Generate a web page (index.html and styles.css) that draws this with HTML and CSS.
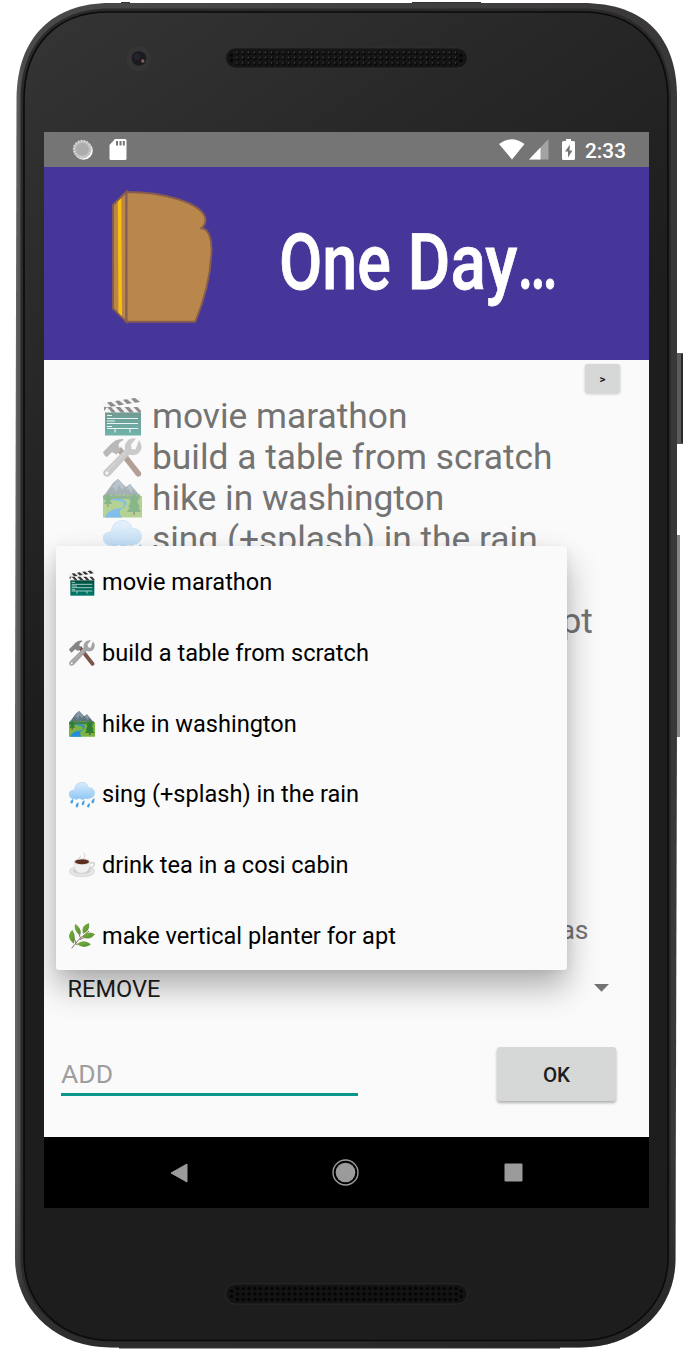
FILE: index.html
```html
<!DOCTYPE html>
<html lang="en">
<head>
<meta charset="utf-8">
<title>One Day…</title>
<link rel="stylesheet" href="styles.css">
</head>
<body>
<svg class="defs" width="0" height="0" aria-hidden="true">
  <defs>
    <linearGradient id="sky" x1="0" y1="0" x2="0" y2="1"><stop offset="0" stop-color="#d8ecfb"/><stop offset="1" stop-color="#8fc5f4"/></linearGradient>
    <linearGradient id="slate" x1="0" y1="0" x2="0" y2="1"><stop offset="0" stop-color="#004d40"/><stop offset="1" stop-color="#00796b"/></linearGradient>
    <linearGradient id="leaf" x1="0" y1="0" x2="1" y2="1"><stop offset="0" stop-color="#7cb342"/><stop offset="1" stop-color="#558b2f"/></linearGradient>
    <symbol id="movie" viewBox="0 0 39 39">
      <path d="M2 15h36v23.500H2z" fill="url(#slate)"/>
      <path d="M0 6 38 0v5L1 11z" fill="#eee"/>
      <path d="M4 5.400 8 4.700l5 4.200-5 .900zM12 4.100l4-.6 5 4.100-5 .8zM20 2.800l4-.6 5 4.100-5 .8zM28 1.500l4-.6 5 4-5 .9z" fill="#333"/>
      <path d="M1 10h37v5.500H1z" fill="#eee"/>
      <path d="M1 10h3l-3 4zM8 10l5 5.500H9L4 10zM17 10l5 5.500h-4.500L12.500 10zM26 10l5 5.500h-4.500L21.500 10zM34.500 10l3.500 4v1.500h-2.500l-5-5.500z" fill="#333"/>
      <path d="M4 18.500h5M4 21.500h31M4 24h8M4 26.500h31M4 29.500h5M4 31.500h31M12 32v3.500M27 32v3.500" stroke="#d9f3ee" stroke-width="1.100" fill="none"/>
    </symbol>
    <symbol id="tools" viewBox="0 0 39 39">
      <path d="m14 13 4-4 20 25.500q1 3-2 4-2 .500-3-1z" fill="#795548"/>
      <path d="M0 14 7 7Q13 0 20 1l.500 1q-5 2-5 6l2.500 4-4.500 4.500L9 14l-5 5q-3-1-4-5z" fill="#858585"/>
      <path d="M36 2q3 4 2.500 8-1.500 6-7 7-2.500.500-5-.500L7 37.500q-3 2.500-6 0-2-3 .500-5.500L22 11.500q-1-5 2-8 3-4 9-3l-5 6 .500 4.500 4 .500z" fill="#a4a4a4"/>
      <path d="M3 34.500 24 13" stroke="#b5b5b5" stroke-width="1.500"/>
      <circle cx="4" cy="35" r="1.500" fill="#fafafa"/>
    </symbol>
    <symbol id="park" viewBox="0 0 39 39">
      <path d="M0 18 10 4l5-4 8 8 4-3 12 14v6H0z" fill="#617581"/>
      <path d="m15 0-7 9 3-1 2 5 3-7 3 5 3-3zM27 5l-4 6 3-1 2 4 2-4 3 3z" fill="#8398a4"/>
      <path d="M0 17q20-3 39 0v21.500H0z" fill="#7cb342"/>
      <path d="m0 17 2-2 2 2 2-2 2 2 3-2 2 2 2-2 2 2 2-2 2 2 2-2 2 2 2-2 2 2 3-2 2 2 3-2v5H0z" fill="#3f8048"/>
      <path d="M5 21q15 0 16 4t-9 5q-9 3-10 8.500h17q-5-6 0-9 7-4 3-8-5-3-17-.500z" fill="#238ce0"/>
      <path d="m5 14-4 7h2l-2 4h8l-2-4h2zM31 14l-5 8h2l-3 6h2l-3 5h14l-3-5h2l-3-6h2z" fill="#2e7d32"/>
      <path d="M30 33h2v3h-2zM4 25h1.500v3H4z" fill="#6d4c41"/>
    </symbol>
    <symbol id="rain" viewBox="0 0 39 39">
      <path d="M7 25Q0 24 0 17.500 1 12 8 12 9 6 12 3 16 0 21 .500q6 .500 8 8 8-.500 9.500 7 0 8-7.500 9-3 2-6 0-5 4-9 0-5 3-9 .500z" fill="url(#sky)" stroke="#9bc9ee" stroke-width=".7"/>
      <path d="M6 25q-6 5-3 7 4 1 3-7zM23 27q-6 5-3 8 4 0 3-8zM38 24q-7 6-3 8 4 0 3-8zM14 30q-6 5-3 8 4 1 3-8zM31 31q-6 5-3 7 4 1 3-7z" fill="#429fe3"/>
    </symbol>
    <symbol id="cup" viewBox="0 0 39 39">
      <ellipse cx="19.500" cy="29" rx="19" ry="8.300" fill="#e5e5e5" stroke="#c5c5c5" stroke-width=".7"/>
      <ellipse cx="19.500" cy="28" rx="13" ry="5" fill="#cfcfcf"/>
      <path d="M31 17q8-3 7 2-1 4-10 7" fill="none" stroke="#cacaca" stroke-width="2"/>
      <path d="M7 14q0 14 7 17 6 2 12-1 6-4 6-16z" fill="#f0f0f0" stroke="#ccc" stroke-width=".5"/>
      <ellipse cx="19.500" cy="14.500" rx="12.500" ry="5" fill="#ddd"/>
      <ellipse cx="19.500" cy="14.500" rx="10.500" ry="3.700" fill="#5d2d20"/>
      <path d="M17 12q-4-3 1-6M21 11q5-5 1-10" fill="none" stroke="#d8cfcd" stroke-width="1.500"/>
    </symbol>
    <symbol id="herb" viewBox="0 0 39 39">
      <path d="M4 38Q13 24 30 12M10 31q0-6-4-10M17 22q-2-6-4-10M16 25q9-5 17-7M10 32q9-2 14 0" fill="none" stroke="#8d6e63" stroke-width="1.500"/>
      <g fill="url(#leaf)">
        <path d="M5 10q-9 8-2 17l4 4q4-12-2-21z"/><path d="M9 1q-3 11 8 17Q20 8 9 1z"/>
        <path d="M30 0Q17 4 21 16q11-4 9-16z"/><path d="M39 17q-10-7-19 4 11 6 19-4z"/>
        <path d="M12 32q9-9 21 0-10 8-21 0z"/>
      </g>
    </symbol>
  </defs>
</svg>

<main class="stage">
  <svg class="device" viewBox="0 0 690 1353" aria-hidden="true">
    <defs>
      <linearGradient id="rim" x1="0" y1="0" x2="1" y2="0"><stop offset="0" stop-color="#666"/><stop offset=".012" stop-color="#4a4a4a"/><stop offset=".5" stop-color="#424142"/><stop offset="1" stop-color="#3a3738"/></linearGradient>
      <linearGradient id="shade" x1="0" y1="0" x2="0" y2="1"><stop offset=".85" stop-color="#111" stop-opacity="0"/><stop offset="1" stop-color="#111" stop-opacity=".5"/></linearGradient>
      <linearGradient id="glass" gradientUnits="userSpaceOnUse" x1="60" y1="10" x2="380" y2="480"><stop offset="0" stop-color="#343435"/><stop offset=".45" stop-color="#292929"/><stop offset="1" stop-color="#1d1d1e"/></linearGradient>
      <pattern id="topdots" x="234.500" y="50.200" width="5.750" height="5.300" patternUnits="userSpaceOnUse"><circle cx="3" cy="3" r="1.700" fill="#050505"/><circle cx="2.400" cy="2.200" r=".8" fill="#4a4a4a"/></pattern>
      <pattern id="lowdots" x="234.500" y="1285.500" width="5.750" height="5.500" patternUnits="userSpaceOnUse"><circle cx="3" cy="3" r="1.600" fill="#020202"/></pattern>
    </defs>
    <path d="M121 3V2h9v1M412 3V2h69v1M119 1346h441v2.500H119z" fill="#333"/>
    <rect x="676" y="353" width="7" height="91" fill="#5b5b5b"/>
    <rect x="681" y="354" width="2" height="89" fill="#292929"/>
    <rect x="676" y="535" width="4" height="202" fill="#858585"/>
    <path d="M110 3H582C645 3 677 37 677 97V720L675.500 1260C675 1310 636 1347.500 580 1347.500H112C52 1347.500 15 1306 15 1258V720L16.500 98C17 37 53 3 110 3z" fill="url(#rim)"/>
    <path d="M110 3H582C645 3 677 37 677 97V720L675.500 1260C675 1310 636 1347.500 580 1347.500H112C52 1347.500 15 1306 15 1258V720L16.500 98C17 37 53 3 110 3z" fill="url(#shade)"/>
    <path d="M109 8.500H582C637 8.500 671 43 671 100V1258C671 1305 633 1342.500 580 1342.500H112C58 1342.500 20.500 1305 20.500 1258V100C20.500 43 55 8.500 109 8.500z" fill="#2a2a2a"/>
    <path d="M108 12H582C635 12 668 45 668 100V1257C668 1304 631 1340.500 580 1340.500H112C60 1340.500 24 1304 24 1257V100C24 45 57 12 108 12z" fill="url(#glass)" stroke="#0b0b0b" stroke-width="1.600"/>
    <circle cx="138.500" cy="58.500" r="12.500" fill="#353536"/>
    <circle cx="139" cy="58.500" r="7.300" fill="#1b1a21"/>
    <circle cx="137" cy="57" r="3" fill="#26242e"/>
    <circle cx="142.800" cy="61" r="1.700" fill="#8d5e5c"/>
    <rect x="225.500" y="48" width="242" height="20" rx="10" fill="#151515" stroke="#333" stroke-width=".7"/>
    <rect x="234.500" y="50.200" width="224.200" height="15.900" fill="url(#topdots)"/>
    <g fill="#050505"><circle cx="231.500" cy="55.500" r="1.700"/><circle cx="231.500" cy="60.500" r="1.700"/><circle cx="461" cy="55.500" r="1.700"/><circle cx="461" cy="60.500" r="1.700"/></g>
    <rect x="225.500" y="1284" width="242" height="20" rx="10" fill="#131313" stroke="#303030" stroke-width=".7"/>
    <rect x="234.500" y="1285.500" width="224.200" height="16.500" fill="url(#lowdots)"/>
    <g fill="#020202"><circle cx="231.500" cy="1291" r="1.600"/><circle cx="231.500" cy="1296.500" r="1.600"/><circle cx="461" cy="1291" r="1.600"/><circle cx="461" cy="1296.500" r="1.600"/></g>
  </svg>

  <section class="screen">
    <div class="status">
      <svg class="status-icon sync" width="22" height="22" viewBox="0 0 22 22"><circle cx="11.500" cy="11.500" r="9.300" fill="#fff"/><circle cx="10.300" cy="10.300" r="9.200" fill="#bdbdbd"/><circle cx="10.300" cy="10.300" r="8.200" fill="none" stroke="#d6d6d6" stroke-width="2.600" stroke-dasharray="1.100 1.750"/><circle cx="10.300" cy="10.300" r="6.500" fill="#adadad"/></svg>
      <svg class="status-icon" width="18" height="22" viewBox="0 0 18 22"><path d="M6 0h10q1.500 0 1.500 1.500v18q0 1.500-1.500 1.500H2Q.5 21 .5 19.500V6z" fill="#fff"/><path d="M7 2h2v4.500H7zM10.500 2h2v4.500h-2zM13.800 2h2v4.500h-2z" fill="#757575"/></svg>
      <span class="spacer"></span>
      <svg class="status-icon" width="26" height="21" viewBox="0 0 26 21"><path d="M0 5Q12.500-4.500 25.500 5L13 20.500z" fill="#fff"/></svg>
      <svg class="status-icon cell" width="20" height="21" viewBox="0 0 20 21"><path d="M19.500 0v20.500H0z" fill="#a3a3a3"/><path d="M11.500 8.500v12H0z" fill="#fff"/></svg>
      <svg class="status-icon battery" width="13" height="22" viewBox="0 0 13 22"><path d="M4 0h5v2h2.500Q13 2 13 3.500v16q0 1.500-1.500 1.500h-10Q0 21 0 19.500v-16Q0 2 1.500 2H4z" fill="#fff"/><path d="M8 5.500 3 12.500h3v6l4.500-7H7.500z" fill="#757575"/></svg>
      <span class="time">2:33</span>
    </div>

    <header class="banner">
      <svg width="605" height="192" viewBox="44 167 605 192">
        <g stroke="#865c4e" stroke-width="1.900" fill="#b9874b">
          <path d="M113 205 126.500 191.500V322L113 308.500z"/>
          <path d="M126.500 192C165 192 200 203 205 217Q207 223 201.500 228.300C209 228.500 212 240 211.500 252 210.500 277 204 301 195.300 321.800H126.500z"/>
        </g>
        <path d="m117.800 201.500 3.500-3.300.7 118-3.500-3.500z" fill="#fbc108"/>
        <text class="title" y="289"><tspan x="279" textLength="112" lengthAdjust="spacingAndGlyphs">One</tspan><tspan x="407.500" textLength="110" lengthAdjust="spacingAndGlyphs">Day</tspan><tspan x="517.500" textLength="40" lengthAdjust="spacingAndGlyphs">…</tspan></text>
      </svg>
    </header>

    <div class="content">
      <button class="btn next">&gt;</button>
      <ul class="list">
        <li><svg><use href="#movie"/></svg>movie marathon</li>
        <li><svg><use href="#tools"/></svg>build a table from scratch</li>
        <li><svg><use href="#park"/></svg>hike in washington</li>
        <li><svg><use href="#rain"/></svg>sing (+splash) in the rain</li>
        <li><svg><use href="#cup"/></svg>drink tea in a cosi cabin</li>
        <li><svg><use href="#herb"/></svg>make vertical planter for apt</li>
      </ul>
      <div class="note">as</div>
      <div class="spinner"><span>REMOVE</span><svg width="15" height="8" viewBox="0 0 15 8"><path d="M0 0h15L7.500 7.700z" fill="#737373"/></svg></div>
      <div class="entry"><div class="field">ADD</div><button class="btn ok">OK</button></div>
    </div>

    <nav class="nav">
      <svg width="18" height="20" viewBox="0 0 18 20"><path d="M1 10 17 1v18z" fill="#9b9b9b" stroke="#9b9b9b" stroke-linejoin="round"/></svg>
      <svg width="27" height="27" viewBox="0 0 27 27"><circle cx="13.500" cy="13.500" r="12.500" fill="none" stroke="#9b9b9b" stroke-width="1.400"/><circle cx="13.500" cy="13.500" r="9.800" fill="#9b9b9b"/></svg>
      <svg width="19" height="19" viewBox="0 0 19 19"><rect x=".5" y=".5" width="18" height="18" rx="1" fill="#9b9b9b"/></svg>
    </nav>

    <ul class="popup">
      <li><svg><use href="#movie"/></svg>movie marathon</li>
      <li><svg><use href="#tools"/></svg>build a table from scratch</li>
      <li><svg><use href="#park"/></svg>hike in washington</li>
      <li><svg><use href="#rain"/></svg>sing (+splash) in the rain</li>
      <li><svg><use href="#cup"/></svg>drink tea in a cosi cabin</li>
      <li><svg><use href="#herb"/></svg>make vertical planter for apt</li>
    </ul>
  </section>
</main>
</body>
</html>
```

FILE: styles.css
```css
* { box-sizing: border-box; }
body { margin: 0; background: #fff; font-family: Roboto, "Liberation Sans", sans-serif; }
ul { margin: 0; padding: 0; list-style: none; }
svg { display: block; flex: none; }
.defs { position: absolute; }
.stage { position: relative; width: 690px; height: 1353px; padding: 132px 41px 0 44px; overflow: hidden; }
.device { position: absolute; inset: 0; width: 690px; height: 1353px; }
.screen { position: relative; display: flex; flex-direction: column; height: 1076px; overflow: hidden; background: #fafafa; }

.status { display: flex; height: 35px; padding: 7px 23px 0 27.500px; background: #757575; color: #fff; }
.sync { margin-right: 15px; }
.spacer { flex: 1; }
.cell { margin: 0 13px 0 4px; }
.battery { margin-right: 10.500px; }
.time { font-size: 20.800px; font-weight: 500; line-height: 24px; }

.banner { height: 192.500px; background: #463699; }
.title { font-size: 78px; font-weight: 500; fill: #fff; stroke: #fff; stroke-width: .8px; }

.content { display: flex; flex-direction: column; height: 777.500px; padding: 4.500px 33px 0 17px; }
.btn { border: 0; padding: 0; border-radius: 3px; background: #d6d8d7; color: #1d1d1d; font-family: inherit; box-shadow: 0 2px 3px rgba(0, 0, 0, .3); }
.next { align-self: flex-end; width: 35px; height: 29px; margin-right: -4px; padding-top: 1px; font-size: 11.500px; font-weight: 700; box-shadow: 0 1px 3px rgba(0, 0, 0, .2); }
.list { margin: 2.500px 0 0 41px; color: #737373; font-size: 35.330px; line-height: 41px; }
.list li { display: flex; align-items: center; height: 41px; white-space: nowrap; }
.list svg { width: 39px; height: 39px; margin: 1px 10.500px 0 .5px; opacity: .55; }
.note { margin-top: 272px; padding-right: 27.500px; color: #737373; font-size: 26.500px; line-height: 32px; text-align: right; }
.spinner { display: flex; align-items: center; justify-content: space-between; height: 56px; margin-top: 14px; padding: 0 7px 0 6.500px; color: #1d1d1d; font-size: 23.560px; }
.spinner span { padding-top: 2px; }
.entry { display: flex; justify-content: space-between; margin-top: 31px; }
.field { width: 297px; height: 49.500px; border-bottom: 3px solid #0a9688; color: #9e9e9e; font-size: 26.500px; line-height: 54px; }
.ok { width: 119px; height: 54px; padding-top: 2px; font-size: 20.600px; font-weight: 500; }

.nav { display: flex; align-items: center; justify-content: space-between; height: 71px; padding: 0 126.500px 0 125.500px; background: #000; }

.popup { position: absolute; left: 12px; top: 414px; width: 511px; border-radius: 3px; background: #fafafa; color: #000; font-size: 23.560px; box-shadow: 0 17px 32px rgba(0, 0, 0, .3), 0 2px 10px rgba(0, 0, 0, .06); }
.popup li { display: flex; align-items: center; height: 70.670px; padding: 2px 0 0 12.500px; white-space: nowrap; }
.popup svg { width: 26px; height: 26px; margin: 1px 7.500px 0 0; }
```
